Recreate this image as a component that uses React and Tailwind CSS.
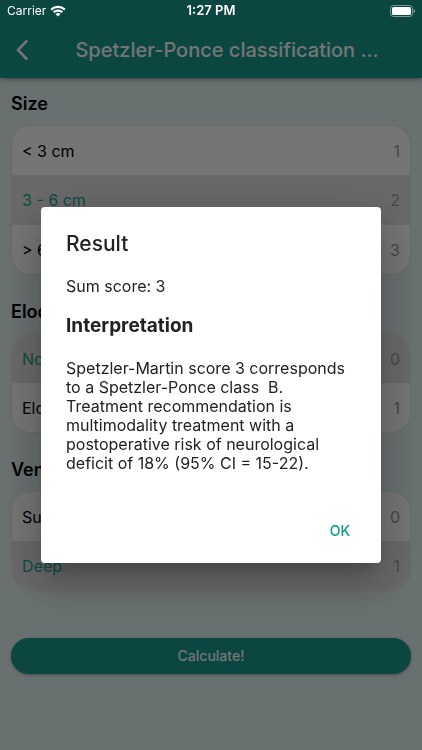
import React, { useState } from 'react';

const groups = [
  {
    name: 'size',
    title: 'Size',
    options: [
      { label: '< 3 cm', value: 1 },
      { label: '3 - 6 cm', value: 2 },
      { label: '> 6 cm', value: 3 },
    ],
  },
  {
    name: 'eloquence',
    title: 'Eloquence of adjacent brain',
    options: [
      { label: 'Non-eloquent', value: 0 },
      { label: 'Eloquent', value: 1 },
    ],
  },
  {
    name: 'drainage',
    title: 'Venous drainage',
    options: [
      { label: 'Superficial only', value: 0 },
      { label: 'Deep', value: 1 },
    ],
  },
];

function StatusBar() {
  return (
    <div className="relative z-20 grid h-[21px] grid-cols-3 items-center px-[7px] text-white">
      <div className="flex items-center gap-1 text-xs">
        <span>Carrier</span>
        <svg width="16" height="12" viewBox="0 0 16 12" fill="none" stroke="white" strokeWidth="2.2">
          <path d="M1.2 4.6a9.8 9.8 0 0 1 13.6 0" />
          <path d="M3.7 7.3a6.2 6.2 0 0 1 8.6 0" />
          <path d="M8 11.6 5.5 9.1a3.6 3.6 0 0 1 5 0Z" fill="white" stroke="none" />
        </svg>
      </div>
      <span className="text-center text-[13px] font-semibold">1:27 PM</span>
      <svg className="justify-self-end" width="25" height="12" viewBox="0 0 25 12" fill="none">
        <rect x="0.5" y="0.5" width="22" height="11" rx="3" stroke="white" strokeOpacity="0.45" />
        <rect x="2" y="2" width="19" height="8" rx="1.6" fill="white" />
        <path d="M23.600 4v4c.8-.3 1.300-1.1 1.300-2s-.5-1.700-1.300-2Z" fill="white" fillOpacity="0.5" />
      </svg>
    </div>
  );
}

function OptionGroup({ group, selected, onSelect }) {
  return (
    <fieldset className="mb-[25px]">
      <legend className="mb-[9px] text-lg leading-6 font-semibold text-black">{group.title}</legend>
      <div className="overflow-hidden rounded-[20px] border border-[#e2e4e4] bg-white">
        {group.options.map((option) => (
          <label
            key={option.value}
            className="flex h-[50px] items-center justify-between px-[10px] text-base text-black first:h-[49px] last:h-[49px] has-checked:bg-[#e4e4e4] has-checked:text-[#20a597]"
          >
            <input
              type="radio"
              name={group.name}
              className="sr-only"
              checked={selected === option.value}
              onChange={() => onSelect(option.value)}
            />
            <span>{option.label}</span>
            <span className="text-[#9a9a9a]">{option.value}</span>
          </label>
        ))}
      </div>
    </fieldset>
  );
}

function ResultDialog({ onClose }) {
  return (
    <div className="fixed inset-0 z-10 flex items-center justify-center bg-black/54 px-[41px] pt-5">
      <div
        role="dialog"
        aria-labelledby="result-title"
        className="w-full max-w-[560px] rounded bg-white shadow-[0_11px_15px_-7px_rgba(0,0,0,0.2),0_24px_38px_3px_rgba(0,0,0,0.14),0_9px_46px_8px_rgba(0,0,0,0.12)]"
      >
        <div className="px-[25px] pt-[25px] text-[#222222]">
          <h2 id="result-title" className="text-[21px] leading-6 font-medium">Result</h2>
          <p className="mt-5 text-base leading-5">Sum score: 3</p>
          <h3 className="mt-5 text-[19px] leading-5 font-bold">Interpretation</h3>
          <p className="mt-[23px] text-base leading-[19px]">
            Spetzler-Martin score 3 corresponds to a Spetzler-Ponce class{'\u00a0 '}B. Treatment
            recommendation is multimodality treatment with a postoperative risk of neurological
            deficit of 18% (95% CI = 15-22).
          </p>
        </div>
        <div className="flex justify-end px-[9px] pt-10 pb-[14px]">
          <button onClick={onClose} className="h-9 w-16 rounded text-sm font-medium text-[#10988a]">
            OK
          </button>
        </div>
      </div>
    </div>
  );
}

function App() {
  const [answers, setAnswers] = useState({ size: 2, eloquence: 0, drainage: 1 });
  const [showResult, setShowResult] = useState(true);

  return (
    <div className="min-h-screen bg-[#e5f3f4] font-['Inter',sans-serif]">
      <header className="bg-[#189a8f] shadow-[0_1px_5px_rgba(0,0,0,0.45)]">
        <StatusBar />
        <div className="flex h-[57px] items-center px-[10px] text-white">
          <button aria-label="Back" className="flex size-6 shrink-0 items-center justify-center">
            <svg width="14" height="22" viewBox="0 0 14 22" fill="none" stroke="currentColor" strokeWidth="2.6">
              <path d="M12.200 1.500 3 11l9.200 9.500" />
            </svg>
          </button>
          <h1 className="ml-2 flex-1 truncate text-center text-xl font-medium">Spetzler-Ponce classification ...</h1>
        </div>
      </header>

      <main className="px-[11px] pt-[14px] pb-8">
        {groups.map((group) => (
          <OptionGroup
            key={group.name}
            group={group}
            selected={answers[group.name]}
            onSelect={(value) => setAnswers({ ...answers, [group.name]: value })}
          />
        ))}
        <button
          onClick={() => setShowResult(true)}
          className="mt-[22px] h-9 w-full rounded-full bg-[#189a8f] text-sm font-medium text-white shadow-[0_1px_3px_rgba(0,0,0,0.35)]"
        >
          Calculate!
        </button>
      </main>

      {showResult && <ResultDialog onClose={() => setShowResult(false)} />}
    </div>
  );
}

export default App;
